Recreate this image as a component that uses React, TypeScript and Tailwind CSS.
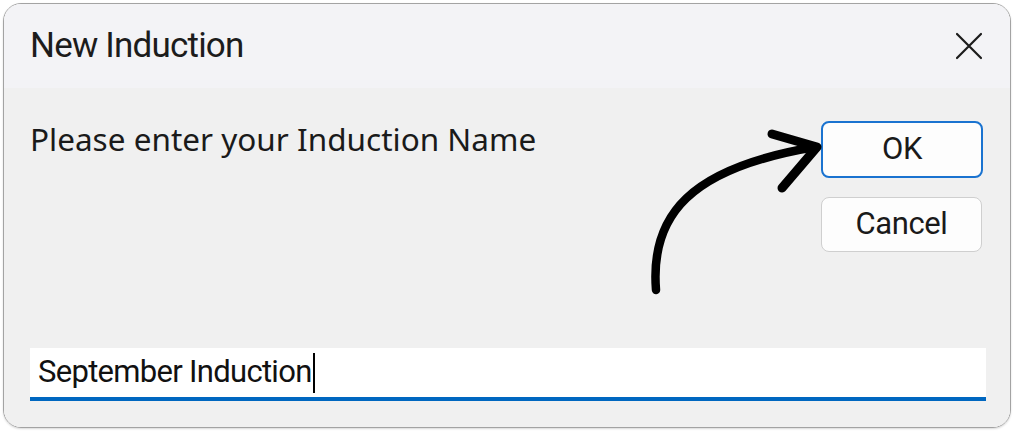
import React from 'react';

const narrow = { fontFamily: '"Roboto", "Liberation Sans", sans-serif' };

const CloseIcon = () => (
  <svg className="w-[28px] h-[28px] text-[#1b1b1b]" viewBox="0 0 28 28" fill="none" stroke="currentColor">
    <path strokeWidth="2.2" strokeLinecap="round" d="M2 2l24 24M26 2L2 26" />
  </svg>
);

const Arrow = () => (
  <svg className="absolute left-0 top-0 pointer-events-none" width="1016" height="431" viewBox="0 0 1016 431" fill="none">
    <path d="M656 290 C 650 215, 690 168, 815 147" stroke="#000" strokeWidth="8.5" strokeLinecap="round" />
    <path d="M772 134 L 817 147 L 782 188" stroke="#000" strokeWidth="9" strokeLinecap="round" strokeLinejoin="round" />
  </svg>
);

export default function App() {
  return (
    <div className="relative w-[1016px] h-[431px] bg-white p-[3px] pr-[5px]">
      <div className="flex flex-col h-[425px] border border-[#a3a3a3] rounded-[18px] overflow-hidden shadow-[0_1px_2px_rgba(0,0,0,0.15)]">
        {/* title bar */}
        <div className="h-[84px] shrink-0 flex items-center justify-between bg-[#f3f3f6] pl-[26px] pr-[27px]">
          <span className="text-[35px] text-[#1c1c1c] tracking-[-0.8px]" style={narrow}>New Induction</span>
          <CloseIcon />
        </div>

        {/* body */}
        <div className="flex-1 flex flex-col bg-[#f0f0f0] pl-[26px] pr-[24px] pt-[33px] pb-[26px]">
          <div className="flex justify-between">
            <p className="text-[31.5px] leading-[36px] text-[#1a1a1a]" style={{ fontFamily: '"Noto Sans", "Open Sans", sans-serif' }}>
              Please enter your Induction Name
            </p>
            <div className="flex flex-col gap-[19px] mr-[3px]">
              <button className="w-[162px] h-[57px] rounded-[8px] border-2 border-[#1a73d0] bg-[#fdfdfd] text-[31px] text-[#1a1a1a] tracking-[-0.4px]" style={narrow}>
                OK
              </button>
              <button className="w-[161px] h-[55px] rounded-[8px] border border-[#cfcfcf] bg-[#fdfdfd] text-[31px] text-[#1a1a1a] tracking-[-0.4px]" style={narrow}>
                Cancel
              </button>
            </div>
          </div>

          <div className="mt-auto h-[53px] bg-white border-b-4 border-[#0067c0] flex items-center pl-[8px]">
            <span className="text-[31px] text-[#111] tracking-[-0.7px]" style={narrow}>September Induction</span>
            <span className="w-[2px] h-[40px] bg-black ml-[1px]" />
          </div>
        </div>
      </div>
      <Arrow />
    </div>
  );
}
